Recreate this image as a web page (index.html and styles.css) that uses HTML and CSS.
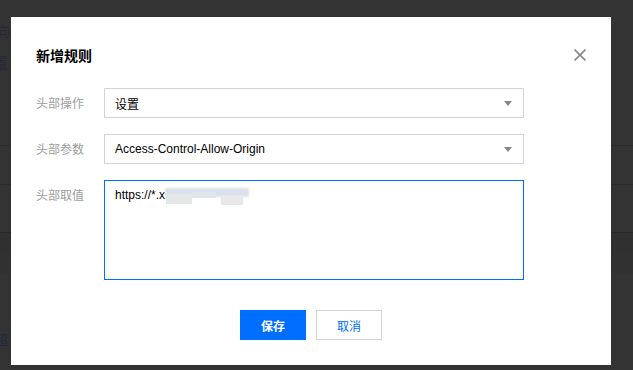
FILE: index.html
```html
<!DOCTYPE html>
<html lang="zh">
<head>
<meta charset="utf-8">
<link rel="stylesheet" href="styles.css">
</head>
<body>
<div class="page">
  <div class="bg-text t1">向应</div>
  <div class="bg-text t2">置</div>
  <div class="bg-rows">
    <div class="bg-row r1"></div>
    <div class="bg-row r2"></div>
    <div class="bg-row r3"></div>
    <div class="bg-row r4"></div>
  </div>
  <div class="bg-text t3">超</div>
</div>
<div class="modal">
  <div class="modal-head">
    <h3 class="modal-title">新增规则</h3>
    <span class="close" aria-label="关闭">
      <svg width="12" height="12" viewBox="0 0 12 12"><path d="M0.5 0.5 L11.5 11.5 M11.5 0.5 L0.5 11.5" stroke="#888" stroke-width="1.6"/></svg>
    </span>
  </div>
  <div class="form">
    <div class="form-row">
      <label class="label">头部操作</label>
      <div class="select"><span>设置</span><i class="caret"></i></div>
    </div>
    <div class="form-row">
      <label class="label">头部参数</label>
      <div class="select"><span>Access-Control-Allow-Origin</span><i class="caret"></i></div>
    </div>
    <div class="form-row top">
      <label class="label">头部取值</label>
      <div class="textarea"><span class="val">https://*.x</span><span class="blur"><i class="b1"></i><i class="b2"></i><i class="b3"></i><i class="b4"></i></span></div>
    </div>
  </div>
  <div class="modal-foot">
    <button class="btn primary">保存</button>
    <button class="btn">取消</button>
  </div>
</div>
</body>
</html>
```
FILE: styles.css
```css
html, body { margin: 0; padding: 0; }
body {
  width: 633px; height: 370px; overflow: hidden;
  background: #333333;
  font-family: "Liberation Sans", Arial, "Noto Sans CJK SC", sans-serif;
  font-size: 12px;
  position: relative;
}
.page { position: relative; height: 370px; }
.bg-text { position: absolute; color: #262b33; font-size: 14px; line-height: 16px; }
.t1 { left: -4px; top: 23px; }
.t2 { left: -6px; top: 55px; }
.t3 { left: -6px; top: 332px; color: #1d2a3d; }
.bg-rows { position: absolute; left: 0; right: 0; top: 145px; }
.bg-row { border-top: 1px solid #2a2a2a; }
.r1 { height: 38px; }
.r2 { height: 47px; }
.r3 { height: 20px; background: #303030; }
.r4 { height: 20px; border-top: none; background: #313131; }

.modal {
  position: absolute; left: 11px; top: 17px;
  width: 600px; height: 348px;
  background: #fff;
  box-sizing: border-box;
  padding: 28px 25px 0 25px;
}
.modal-head { display: flex; justify-content: space-between; align-items: center; height: 20px; }
.modal-title { margin: 0; font-size: 14px; font-weight: bold; color: #000; font-family: "Noto Sans CJK SC", sans-serif; line-height: 20px; }
.close { display: flex; }
.form { margin-top: 23px; display: flex; flex-direction: column; gap: 16px; }
.form-row { display: flex; align-items: center; }
.form-row.top { align-items: flex-start; }
.label { width: 68px; color: #9c9c9c; font-family: "Noto Sans CJK SC", sans-serif; font-size: 12px; line-height: 30px; }
.select {
  width: 420px; height: 30px; box-sizing: border-box;
  border: 1px solid #cfd5de; display: flex; align-items: center; justify-content: space-between;
  padding: 0 10px; color: #000; font-size: 12px;
}
.caret { width: 0; height: 0; border-left: 4px solid transparent; border-right: 4px solid transparent; border-top: 5px solid #888; margin-right: 1px; }
.textarea {
  width: 420px; height: 100px; box-sizing: border-box;
  border: 1px solid #006eff; padding: 5px 10px; color: #000; font-size: 12px; line-height: 18px;
  display: flex; align-items: flex-start;
}
.val { white-space: nowrap; }
.blur { position: relative; display: block; width: 90px; height: 20px; }
.blur i { position: absolute; display: block; }
.b1 { left: 0; top: 2px; width: 84px; height: 9px; background: #d9e1ea; border-radius: 2px; filter: blur(0.8px); }
.b2 { left: 1px; top: 8px; width: 26px; height: 10px; background: #e4e6e8; }
.b3 { left: 27px; top: 6px; width: 24px; height: 6px; background: #e0e5ea; }
.b4 { left: 56px; top: 9px; width: 22px; height: 10px; background: #e8e8e8; }
.modal-foot { margin-top: 30px; display: flex; justify-content: center; gap: 10px; }
.btn {
  width: 66px; height: 30px; box-sizing: border-box; border: 1px solid #cfd5de;
  background: #fff; color: #006eff; font-size: 12px; font-family: "Noto Sans CJK SC", sans-serif; padding: 0; cursor: pointer;
}
.btn.primary { background: #006eff; border-color: #006eff; color: #fff; font-weight: bold; }
```
